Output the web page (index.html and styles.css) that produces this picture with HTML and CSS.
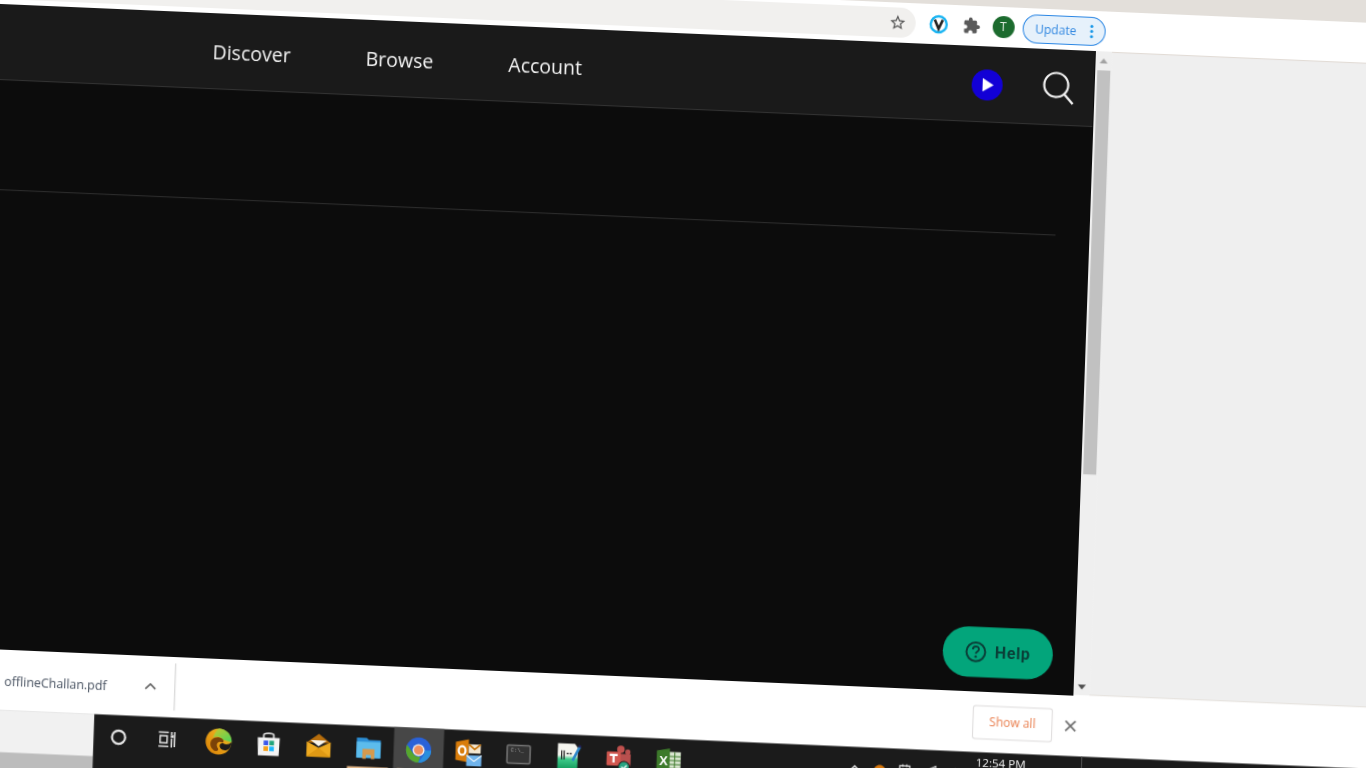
FILE: index.html
```html
<!DOCTYPE html>
<html lang="en">
<head>
<meta charset="utf-8">
<title>Screen capture</title>
<link rel="stylesheet" href="styles.css">
</head>
<body>
<div class="stage">
  <div class="tabstrip"></div>
  <div class="toolbar">
    <div class="omnibox">
      <svg class="star" viewBox="0 0 24 24"><path fill="#555" d="M22 9.24l-7.19-.62L12 2 9.19 8.63 2 9.24l5.46 4.73L5.82 21 12 17.27 18.18 21l-1.63-7.03L22 9.24zM12 15.4l-3.76 2.27 1-4.28-3.32-2.88 4.38-.38L12 6.1l1.71 4.04 4.38.38-3.32 2.88 1 4.28L12 15.4z"/></svg>
    </div>
    <svg class="vext" viewBox="0 0 20 20"><circle cx="10" cy="10" r="8" fill="#fff" stroke="#19b4f2" stroke-width="2.4"/><path d="M6 5.5l4 9 4-9" fill="none" stroke="#222" stroke-width="2.6"/></svg>
    <svg class="puzzle" viewBox="0 0 24 24"><path fill="#5a5a5a" d="M20.5 11H19V7c0-1.1-.9-2-2-2h-4V3.5C13 2.12 11.88 1 10.5 1S8 2.12 8 3.5V5H4c-1.1 0-1.99.9-1.99 2v3.8H3.5c1.49 0 2.7 1.21 2.7 2.7s-1.21 2.7-2.7 2.7H2V20c0 1.1.9 2 2 2h3.8v-1.5c0-1.49 1.21-2.7 2.7-2.7 1.49 0 2.7 1.21 2.7 2.7V22H17c1.1 0 2-.9 2-2v-4h1.5c1.38 0 2.5-1.12 2.5-2.5S21.88 11 20.5 11z"/></svg>
    <div class="avatar">T</div>
    <div class="update">
      <span>Update</span>
      <svg class="dots" viewBox="0 0 4 16"><circle cx="2" cy="2.5" r="1.6"/><circle cx="2" cy="8" r="1.6"/><circle cx="2" cy="13.5" r="1.6"/></svg>
    </div>
  </div>

  <div class="content">
    <div class="main">
      <nav class="nav">
        <a class="nav-link">Discover</a>
        <a class="nav-link">Browse</a>
        <a class="nav-link">Account</a>
        <svg class="play" viewBox="0 0 31 31"><circle cx="15.5" cy="15.5" r="15.5" fill="#1200d6"/><path d="M11 8.8l11 6.7-11 6.7z" fill="#fff"/></svg>
        <svg class="search" viewBox="0 0 32 34"><circle cx="13.5" cy="13.5" r="12" fill="none" stroke="#f2f2f2" stroke-width="2.2"/><path d="M21.8 22.5L30.5 32" stroke="#f2f2f2" stroke-width="2.4" fill="none"/></svg>
      </nav>
      <div class="rule"></div>
      <div class="help">
        <svg class="help-icon" viewBox="0 0 22 22"><circle cx="11" cy="11" r="9.4" fill="none" stroke="#0a3f38" stroke-width="2"/><path d="M8 8.6c0-4 6-4 6-.3 0 2.2-3 2.3-3 4.6" fill="none" stroke="#0a3f38" stroke-width="1.9"/><circle cx="11" cy="15.8" r="1.2" fill="#0a3f38"/></svg>
        <span>Help</span>
      </div>
    </div>
    <div class="scrollbar">
      <div class="arrow-cell"><i class="arrow-up"></i></div>
      <div class="thumb"></div>
      <div class="track"></div>
      <div class="arrow-cell"><i class="arrow-down"></i></div>
    </div>
    <div class="side"></div>
  </div>

  <div class="download">
    <div class="dl-item">
      <span class="dl-name">offlineChallan.pdf</span>
      <svg class="chevron" viewBox="0 0 12 8"><path d="M1 6.5l5-5 5 5" fill="none" stroke="#6b6b6b" stroke-width="1.8"/></svg>
    </div>
    <div class="show-all">Show all</div>
    <svg class="close" viewBox="0 0 12 12"><path d="M1 1l10 10M11 1L1 11" stroke="#6f6f6f" stroke-width="1.8" fill="none"/></svg>
  </div>

  <div class="bottom">
    <div class="desktop"><div class="desktop-strip"></div></div>
    <div class="taskbar">
      <div class="slot">
        <svg class="ico" viewBox="0 0 28 28"><circle cx="14" cy="14" r="6.6" fill="none" stroke="#e8e8e8" stroke-width="2.2"/></svg>
      </div>
      <div class="slot">
        <svg class="ico task" viewBox="0 0 28 28" fill="none" stroke="#e8e8e8" stroke-width="1.5"><path d="M6 7h10M6 21h10M7.5 10.500h7v7h-7zM19 6.500v3M19 13v9M22 6.500v15"/><path d="M18 11h3" stroke-width="2.4"/></svg>
      </div>
      <div class="slot">
        <svg class="ico big" viewBox="0 0 28 28">
          <defs>
            <linearGradient id="edge" x1="0" y1="1" x2="1" y2="0"><stop offset="0" stop-color="#d97f06"/><stop offset=".6" stop-color="#eca81a"/><stop offset="1" stop-color="#a8c832"/></linearGradient>
            <linearGradient id="edge2" x1="0" y1="0" x2="1" y2="1"><stop offset="0" stop-color="#c8c82e"/><stop offset="1" stop-color="#4ed45a"/></linearGradient>
          </defs>
          <circle cx="14" cy="14" r="13" fill="url(#edge)"/>
          <path d="M14 1A13 13 0 0 1 27 14L18 12C16 9 12 8 8.500 10.500 9.500 5.500 12 2 14 1z" fill="url(#edge2)"/>
          <path d="M6 18C5 12 10 9 15 10 19 11 20 14 18 15 14 13 11 16 13 20 15.500 23 12 24.500 9.500 23 7.500 21.500 6.500 20 6 18z" fill="#7a4208"/>
          <path d="M27 14C24 17 21 17 18.500 15.500 14.500 15 14 20 18 22 20.500 23 23 22.500 25 20.500 26 19 27 16.500 27 14z" fill="#1b1b1b"/>
        </svg>
      </div>
      <div class="slot">
        <svg class="ico big" viewBox="0 0 28 28">
          <path d="M9 9V5.500C9 3 19 3 19 5.500V9" fill="none" stroke="#d8d8d8" stroke-width="1.8"/>
          <path d="M3 8h22l-.6 18H3.600z" fill="#f4f4f4"/>
          <rect x="9" y="11" width="4.600" height="4.600" fill="#3b57ee"/><rect x="14.800" y="11" width="4.600" height="4.600" fill="#1fa57b"/>
          <rect x="9" y="16.800" width="4.600" height="4.600" fill="#f6a019"/><rect x="14.800" y="16.800" width="4.600" height="4.600" fill="#18b7ff"/>
        </svg>
      </div>
      <div class="slot">
        <svg class="ico big" viewBox="0 0 28 28">
          <path d="M14 2L26 11H2z" fill="#b76e0c"/>
          <path d="M2 10l12 6 12-6v15H2z" fill="#eeaa20"/>
          <path d="M6 8.500h16l-8 6z" fill="#f8f4ea"/>
          <path d="M14 16l12 9H2z" fill="#d8920f" opacity=".7"/>
        </svg>
      </div>
      <div class="slot running">
        <svg class="ico big" viewBox="0 0 28 28">
          <path d="M2 4h10l2 2h12v18H2z" fill="#2c8fd6"/>
          <rect x="2" y="8" width="24" height="16" fill="#5cbcec"/>
          <path d="M8 15h12v10h-3.500v-4h-5v4H8z" fill="#d59a4d"/>
        </svg>
      </div>
      <div class="slot running active">
        <svg class="ico big" viewBox="0 0 28 28">
          <circle cx="14" cy="14" r="12.600" fill="#2a62d8"/>
          <path d="M14 26.600A12.600 12.600 0 0 1 2.400 9L9 18c2 2.500 5 3 7 2.300z" fill="#57a72d"/>
          <path d="M26.600 14A12.600 12.600 0 0 1 14 26.600l5-7.600c1-1.500 1.300-3 .8-5z" fill="#2a8fdc"/>
          <circle cx="14" cy="14" r="6" fill="#f1f1f1"/>
          <circle cx="14" cy="14" r="4.600" fill="#f08f5e"/>
        </svg>
      </div>
      <div class="slot">
        <svg class="ico big" viewBox="0 0 28 28">
          <path d="M1 4l13-3v23l-13-2z" fill="#d97d0b"/>
          <rect x="14" y="6" width="12" height="9" fill="#f3e6cf"/>
          <path d="M14 6l6 5 6-5" fill="none" stroke="#c87408" stroke-width="1.500"/>
          <ellipse cx="7.500" cy="12.500" rx="3.400" ry="4.300" fill="none" stroke="#fff" stroke-width="2.200"/>
          <rect x="12" y="17" width="15" height="11" fill="#70b4ec"/>
          <path d="M12 17l7.500 6 7.500-6" fill="none" stroke="#e6f2fc" stroke-width="1.200"/>
        </svg>
      </div>
      <div class="slot">
        <svg class="ico big" viewBox="0 0 28 28">
          <rect x="2.500" y="5" width="23" height="18" rx="1.500" fill="#333" stroke="#767676" stroke-width="1.500"/>
          <text class="cmd-text" x="6" y="12">C:\_</text>
        </svg>
      </div>
      <div class="slot">
        <svg class="ico big" viewBox="0 0 28 28">
          <defs><linearGradient id="pad" x1="0" y1="0" x2="0" y2="1"><stop offset=".45" stop-color="#f5f5ef"/><stop offset=".6" stop-color="#3ecb8a"/><stop offset="1" stop-color="#149a5c"/></linearGradient></defs>
          <path d="M3 1h17l3 4v22H3z" fill="url(#pad)"/>
          <path d="M7 8v9M9.500 8v9" stroke="#222" stroke-width="1.200"/>
          <path d="M12 11h2M15 11h2" stroke="#333" stroke-width="1.600"/>
          <path d="M18 18L25 4" stroke="#2b86c9" stroke-width="2.600"/>
          <path d="M24.500 4.500l1-2" stroke="#23235e" stroke-width="2.600"/>
        </svg>
      </div>
      <div class="slot">
        <svg class="ico big" viewBox="0 0 28 28">
          <circle cx="16" cy="4.500" r="3.800" fill="#c2514e"/>
          <circle cx="23" cy="7" r="2.600" fill="#b8504e"/>
          <path d="M11 9h15v10a6 6 0 0 1-12 0z" fill="#b8504e"/>
          <rect x="2" y="7" width="14" height="14" rx="1" fill="#d1574f"/>
          <path d="M5 10.500h8M9 10.500V18" stroke="#fff" stroke-width="2.200"/>
          <circle cx="19.500" cy="22" r="5.500" fill="#29a583" stroke="#1a1a1a"/>
          <path d="M17 22l2 2 3.200-3.600" stroke="#fff" stroke-width="1.400" fill="none"/>
        </svg>
      </div>
      <div class="slot">
        <svg class="ico big" viewBox="0 0 28 28">
          <rect x="14" y="5" width="12" height="20" fill="#d9e6d0"/>
          <path d="M14 9.500h12M14 13.500h12M14 17.500h12M14 21.500h12M20 5v20" stroke="#3f7a2c" stroke-width="1"/>
          <path d="M2 4l13-2.500v25L2 24z" fill="#3d7a2b"/>
          <text class="xl-text" x="4.500" y="18.500">X</text>
        </svg>
      </div>
      <div class="tray">
        <svg class="tray-ico" viewBox="0 0 14 14"><path d="M2 9l5-5 5 5" fill="none" stroke="#eee" stroke-width="1.400"/></svg>
        <svg class="tray-ico" viewBox="0 0 14 14"><path d="M1 9c0-5 3-7 6-7s6 2 6 7c-2 3-10 3-12 0z" fill="#d9780c"/></svg>
        <svg class="tray-ico" viewBox="0 0 14 14"><path d="M2 2h10v9H2z" fill="none" stroke="#eee" stroke-width="1.200"/><path d="M5 0v3M9 0v3" stroke="#eee"/></svg>
        <svg class="tray-ico" viewBox="0 0 14 14"><path d="M1 7L13 1v11H8z" fill="none" stroke="#ddd" stroke-width="1.100"/></svg>
        <svg class="tray-ico" viewBox="0 0 14 14"><path d="M1 5h3l4-3v10L4 9H1z" fill="#eee"/><path d="M10 4c1.500 2 1.500 4 0 6" fill="none" stroke="#eee"/></svg>
      </div>
      <div class="clock">12:54 PM</div>
      <div class="tray-divider"></div>
    </div>
  </div>
</div>
</body>
</html>
```
FILE: styles.css
```css
* { box-sizing: border-box; }
html, body { margin: 0; height: 100%; }
body {
  width: 1366px;
  height: 768px;
  overflow: hidden;
  background: #fff;
  font-family: "Open Sans", "Noto Sans", sans-serif;
}
.stage {
  width: 1700px;
  height: 900px;
  display: flex;
  flex-direction: column;
  transform-origin: 0 0;
  transform: matrix(1, 0.043, -0.035, 1, -57.2, -78.58);
  filter: blur(0.35px);
}
.tabstrip { height: 40px; flex: none; background: #e3dfda; }
.toolbar {
  height: 40px;
  flex: none;
  background: #fff;
  display: flex;
  align-items: center;
}
.omnibox {
  width: 974.5px;
  height: 30px;
  flex: none;
  background: #f1f0ee;
  border-radius: 0 15px 15px 0;
  display: flex;
  align-items: center;
  justify-content: flex-end;
  padding-right: 9px;
}
.star { width: 18px; height: 18px; }
.vext { width: 20px; height: 20px; margin-left: 13px; flex: none; }
.puzzle { width: 18px; height: 18px; margin-left: 14px; flex: none; }
.avatar {
  width: 22px;
  height: 22px;
  margin-left: 12px;
  flex: none;
  border-radius: 50%;
  background: #1c6b2e;
  color: #e8f0e8;
  font-size: 12px;
  font-weight: 500;
  line-height: 22px;
  text-align: center;
}
.update {
  width: 83px;
  height: 29px;
  margin-left: 8px;
  flex: none;
  display: flex;
  align-items: center;
  justify-content: space-between;
  padding: 0 11px 0 12px;
  background: #e6f1fb;
  border: 1.4px solid #2a86e4;
  border-radius: 15px;
  color: #2f86e0;
  font-size: 12px;
}
.dots { width: 4px; height: 15px; fill: #1596e8; }

.content { height: 644px; flex: none; display: flex; }
.main {
  width: 1155px;
  flex: none;
  position: relative;
  background: #0c0c0c;
}
.nav {
  height: 76px;
  display: flex;
  align-items: center;
  gap: 75px;
  padding: 2px 19px 0 274px;
  background: #1a1a1a;
  border-bottom: 1px solid #353535;
}
.nav-link { color: #f4f4f4; font-size: 19.5px; font-weight: 500; line-height: 28px; }
.play { width: 31px; height: 31px; margin-left: auto; flex: none; }
.search { width: 32px; height: 34px; margin-left: -35px; flex: none; }
.rule { height: 1px; margin: 109px 33px 0 0; background: #323232; }
.help {
  position: absolute;
  right: 21px;
  bottom: 14px;
  width: 110px;
  height: 50px;
  display: flex;
  align-items: center;
  gap: 8px;
  padding-left: 22px;
  border-radius: 25px;
  background: #03a57b;
  color: #0a3f38;
  font-family: Roboto, "Open Sans", sans-serif;
  font-size: 16px;
  font-weight: 700;
  letter-spacing: 0.6px;
}
.help-icon { width: 22px; height: 22px; flex: none; }

.scrollbar {
  width: 17px;
  flex: none;
  display: flex;
  flex-direction: column;
  background: #efefef;
}
.arrow-cell { height: 18px; flex: none; display: flex; align-items: center; justify-content: center; }
.arrow-up { border: 4px solid transparent; border-top: 0; border-bottom: 5px solid #a3a3a3; }
.arrow-down { border: 4px solid transparent; border-bottom: 0; border-top: 5px solid #505050; }
.thumb { height: 404px; flex: none; margin: 1px 1px 0 3px; background: #c1c1c1; }
.track { flex: 1; }
.side { flex: 1; background: #efefef; border-top: 1px solid #e2dcd6; border-bottom: 1px solid #e2dcd6; }

.download {
  height: 61px;
  flex: none;
  display: flex;
  align-items: center;
  padding: 0 540px 0 0;
  background: #fff;
}
.dl-item {
  width: 259px;
  height: 47px;
  flex: none;
  display: flex;
  align-items: center;
  justify-content: space-between;
  padding: 0 18px 0 88px;
  border-right: 1px solid #cfcfcf;
}
.dl-name { color: #46505f; font-size: 12.4px; padding-top: 3px; }
.chevron { width: 12px; height: 8px; flex: none; }
.show-all {
  width: 80px;
  height: 34px;
  margin-left: auto;
  flex: none;
  display: flex;
  align-items: center;
  justify-content: center;
  border: 1px solid #dedcdc;
  border-radius: 3px;
  color: #ea7f4e;
  font-size: 12px;
  font-weight: 500;
}
.close { width: 12px; height: 12px; margin-left: 12px; flex: none; }

.bottom { flex: 1; display: flex; }
.desktop { width: 178.7px; flex: none; background: #bcbcbc; }
.desktop-strip { height: 42px; background: #f1f1f1; }
.taskbar {
  flex: 1;
  display: flex;
  align-items: flex-start;
  position: relative;
  height: 70px;
  background: #1b1b1b;
}
.slot {
  width: 50px;
  height: 70px;
  flex: none;
  position: relative;
  padding-top: 8px;
  display: flex;
  justify-content: center;
}
.slot.active { background: #474747; }
.slot.running::after {
  content: "";
  position: absolute;
  left: 4px;
  right: 5px;
  top: 41px;
  height: 6px;
  background: #e6ba8c;
}
.ico { width: 28px; height: 28px; flex: none; }
.ico.task { margin-left: -3px; }
.ico.big { width: 28px; height: 28px; margin-left: 1px; }
.cmd-text { font-family: "Liberation Mono", monospace; font-size: 5.5px; fill: #a8a8a8; }
.xl-text { font-family: "Liberation Sans", sans-serif; font-size: 13px; font-weight: 700; fill: #fff; }
.tray {
  margin: 15px 0 0 149px;
  display: flex;
  flex: none;
}
.tray-ico { width: 14px; height: 14px; margin: 0 5.5px; flex: none; }
.clock {
  margin: 3px 0 0 8px;
  flex: none;
  color: #f2f2f2;
  font-size: 11.6px;
  line-height: 16px;
}
.tray-divider { width: 1px; height: 70px; margin-left: 55px; flex: none; background: #555; }
```
